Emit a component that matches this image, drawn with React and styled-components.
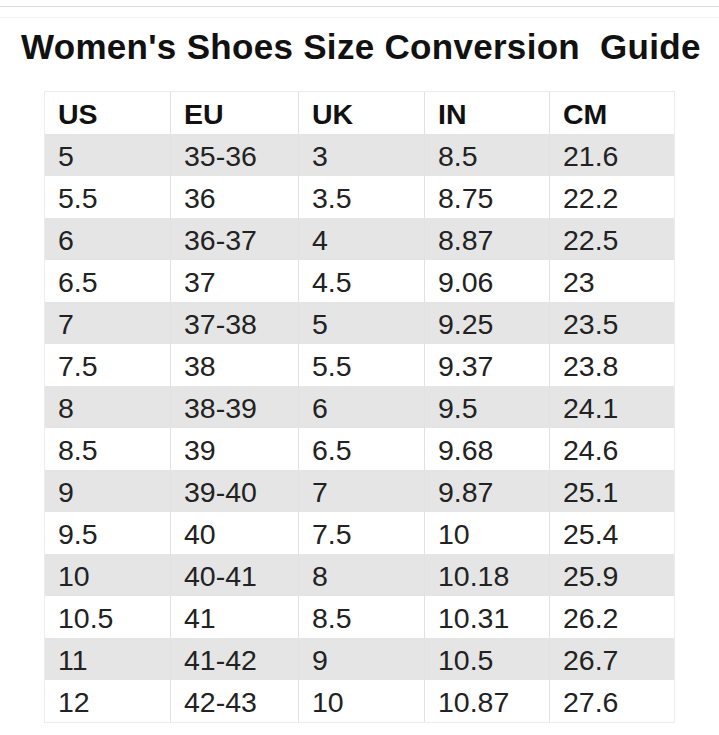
import React from "react";
import styled, { createGlobalStyle } from "styled-components";

const Global = createGlobalStyle`
  html, body { margin: 0; padding: 0; background: #ffffff; }
  body { font-family: "Liberation Sans", Arial, sans-serif; }
`;

const Page = styled.div`
  width: 719px;
  height: 735px;
  box-sizing: border-box;
  border-top: 1px solid #dcdcdc;
  margin-top: 6px;
  position: relative;
  overflow: hidden;
`;

const Frame = styled.div`
  margin-top: 10px;
  border-top: 1px solid #f1f1f1;
  padding: 9px 0 0 21px;
  display: flex;
  flex-direction: column;
`;

const Title = styled.h1`
  margin: 0;
  font-size: 35px;
  line-height: 40px;
  font-weight: 700;
  color: #111111;
  letter-spacing: 0.3px;
  white-space: pre;
`;

const Table = styled.div`
  margin: 24px 0 0 23px;
  width: 631px;
  display: flex;
  flex-direction: column;
  border: 1px solid #ececec;
  box-sizing: border-box;
`;

const Row = styled.div`
  display: grid;
  grid-template-columns: 125px 128px 126px 125px 125px;
  height: 42px;
  background: ${(p) => (p.$shade ? "#e5e5e5" : "#ffffff")};
`;

const Cell = styled.div`
  box-sizing: border-box;
  padding: 2px 0 0 13px;
  font-size: 28.5px;
  line-height: 40px;
  font-weight: ${(p) => (p.$head ? 700 : 400)};
  color: ${(p) => (p.$head ? "#111111" : "#222222")};
  border-left: ${(p) => (p.$first ? "none" : "1px solid #e2e2e2")};
`;

const header = ["US", "EU", "UK", "IN", "CM"];
const rows = [
  ["5", "35-36", "3", "8.5", "21.6"],
  ["5.5", "36", "3.5", "8.75", "22.2"],
  ["6", "36-37", "4", "8.87", "22.5"],
  ["6.5", "37", "4.5", "9.06", "23"],
  ["7", "37-38", "5", "9.25", "23.5"],
  ["7.5", "38", "5.5", "9.37", "23.8"],
  ["8", "38-39", "6", "9.5", "24.1"],
  ["8.5", "39", "6.5", "9.68", "24.6"],
  ["9", "39-40", "7", "9.87", "25.1"],
  ["9.5", "40", "7.5", "10", "25.4"],
  ["10", "40-41", "8", "10.18", "25.9"],
  ["10.5", "41", "8.5", "10.31", "26.2"],
  ["11", "41-42", "9", "10.5", "26.7"],
  ["12", "42-43", "10", "10.87", "27.6"],
];

export default function App() {
  return (
    <>
      <Global />
      <Page>
        <Frame>
          <Title>{"Women's Shoes Size Conversion  Guide"}</Title>
          <Table>
            <Row>
              {header.map((h, i) => (
                <Cell key={h} $head $first={i === 0}>
                  {h}
                </Cell>
              ))}
            </Row>
            {rows.map((r, ri) => (
              <Row key={ri} $shade={ri % 2 === 0}>
                {r.map((v, i) => (
                  <Cell key={i} $first={i === 0}>
                    {v}
                  </Cell>
                ))}
              </Row>
            ))}
          </Table>
        </Frame>
      </Page>
    </>
  );
}
